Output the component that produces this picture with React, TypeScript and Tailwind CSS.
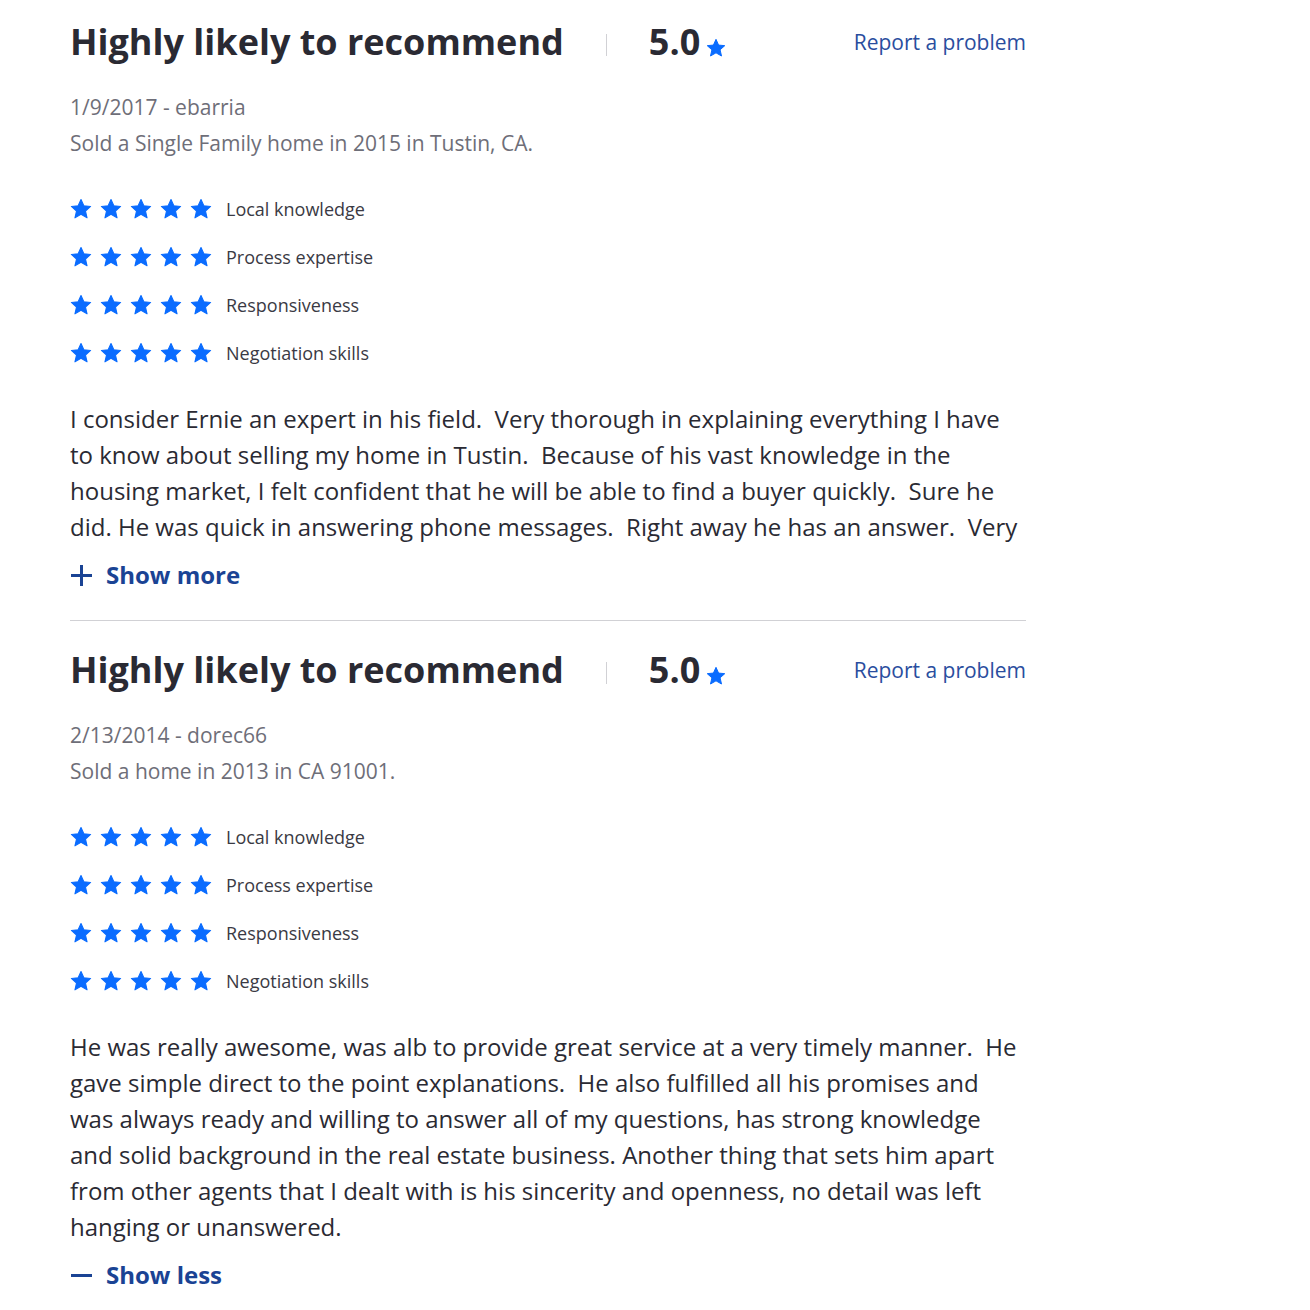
import React from "react";

const Star = ({ size = 22 }: { size?: number }) => (
  <svg width={size} height={size} viewBox="0 0 24 24" aria-hidden>
    <path
      fill="#0A6CFF"
      d="M12 1.6l3.1 6.9 7.4.7-5.6 5 1.7 7.4L12 17.8l-6.6 3.8 1.7-7.4-5.6-5 7.4-.7z"
      stroke="#0A6CFF"
      strokeWidth="1.2"
      strokeLinejoin="round"
    />
  </svg>
);

const categories = ["Local knowledge", "Process expertise", "Responsiveness", "Negotiation skills"];

type Review = {
  date: string;
  sold: string;
  text: string;
  expanded: boolean;
};

const reviews: Review[] = [
  {
    date: "1/9/2017 - ebarria",
    sold: "Sold a Single Family home in 2015 in Tustin, CA.",
    text:
      "I consider Ernie an expert in his field.\u00a0 Very thorough in explaining everything I have to know about selling my home in Tustin.\u00a0 Because of his vast knowledge in the housing market, I felt confident that he will be able to find a buyer quickly.\u00a0 Sure he did. He was quick in answering phone messages.\u00a0 Right away he has an answer.\u00a0 Very professional and always reachable.",
    expanded: false,
  },
  {
    date: "2/13/2014 - dorec66",
    sold: "Sold a home in 2013 in CA 91001.",
    text:
      "He was really awesome, was alb to provide great service at a very timely manner.\u00a0 He gave simple direct to the point explanations.\u00a0 He also fulfilled all his promises and was always ready and willing to answer all of my questions, has strong knowledge and solid background in the real estate business. Another thing that sets him apart from other agents that I dealt with is his sincerity and openness, no detail was left hanging or unanswered.",
    expanded: true,
  },
];

function ReviewCard({ r, last }: { r: Review; last: boolean }) {
  return (
    <div className={last ? "" : "border-b border-[#d1d1d5] pb-[33px] mb-[21px]"}>
      <div className="flex items-center h-[56px]">
        <h2 className="text-[36px] font-bold text-[#2a2a33] leading-none">
          Highly likely to recommend
        </h2>
        <div className="w-px h-[22px] bg-[#d1d1d5] mx-[42px] mt-[6px]" />
        <div className="flex items-end">
          <span className="text-[36px] font-bold text-[#2a2a33] leading-none">5.0</span>
          <span className="ml-[6px] mb-[2px]">
            <Star size={20} />
          </span>
        </div>
        <a className="ml-auto text-[21px] text-[#2a4d9e] leading-none">Report a problem</a>
      </div>
      <div className="mt-[19px] text-[21px] text-[#6e6e78] leading-[36px]">
        <div>{r.date}</div>
        <div>{r.sold}</div>
      </div>
      <div className="mt-[36px] flex flex-col gap-[24px]">
        {categories.map((c) => (
          <div key={c} className="flex items-center h-[24px]">
            <div className="flex gap-[8px]">
              {[0, 1, 2, 3, 4].map((i) => (
                <Star key={i} size={22} />
              ))}
            </div>
            <span className="ml-[14px] text-[18px] text-[#3a3a44]">{c}</span>
          </div>
        ))}
      </div>
      <div
        className={
          "mt-[36px] text-[24px] leading-[36px] text-[#2a2a33] " +
          (r.expanded ? "" : "h-[144px] overflow-hidden")
        }
      >
        {r.text}
      </div>
      <button className="mt-[18px] flex items-center text-[#1a4394] font-bold text-[24px] leading-[24px]">
        <span className="w-[22px] h-[22px] flex items-center justify-center mr-[14px]">
          {r.expanded ? (
            <svg width="21" height="21" viewBox="0 0 21 21">
              <rect x="0" y="9" width="21" height="3" fill="#1a4394" />
            </svg>
          ) : (
            <svg width="21" height="21" viewBox="0 0 21 21">
              <rect x="0" y="9" width="21" height="3" fill="#1a4394" />
              <rect x="9" y="0" width="3" height="21" fill="#1a4394" />
            </svg>
          )}
        </span>
        {r.expanded ? "Show less" : "Show more"}
      </button>
    </div>
  );
}

export default function App() {
  return (
    <div className="min-h-[1310px] bg-white" style={{ fontFamily: '"Open Sans", sans-serif' }}>
      <div className="w-[956px] ml-[70px] pt-[14px]">
        {reviews.map((r, i) => (
          <ReviewCard key={i} r={r} last={i === reviews.length - 1} />
        ))}
      </div>
    </div>
  );
}
